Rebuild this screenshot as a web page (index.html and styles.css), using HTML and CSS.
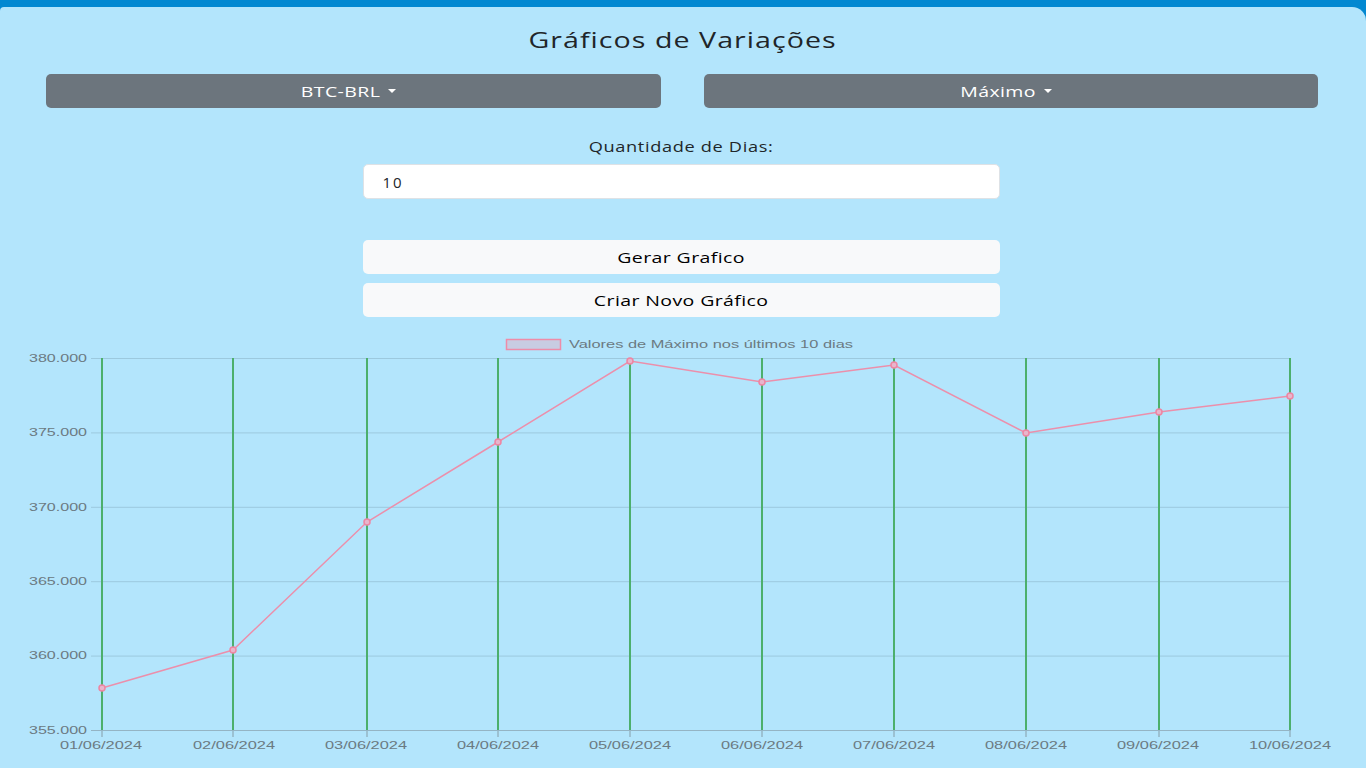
FILE: index.html
```html
<!DOCTYPE html>
<html lang="pt-BR">
<head>
<meta charset="utf-8">
<title>Gráficos de Variações</title>
<link rel="stylesheet" href="styles.css">
</head>
<body>
<div class="topbar"></div>
<main class="panel">
  <h1 class="title"><span class="wide">Gráficos de Variações</span></h1>
  <div class="selects">
    <button class="dropdown"><span class="wide">BTC-BRL</span><span class="caret"></span></button>
    <button class="dropdown"><span class="wide">Máximo</span><span class="caret"></span></button>
  </div>
  <div class="form">
    <label class="label" for="dias"><span class="wide">Quantidade de Dias:</span></label>
    <input id="dias" class="input" type="text" value="10">
    <div class="actions">
      <button class="btn-light"><span class="wide">Gerar Grafico</span></button>
      <button class="btn-light"><span class="wide">Criar Novo Gráfico</span></button>
    </div>
  </div>
  <div class="chart">
    <svg class="chart-svg" width="1366" height="438" viewBox="0 330 1366 438" xmlns="http://www.w3.org/2000/svg">
      <!-- legend -->
      <rect x="506.5" y="339.5" width="54" height="10" fill="#c8cce2" stroke="#ee8ca8" stroke-width="1.5"/>
      <text x="569" y="348" class="tick" textLength="284" lengthAdjust="spacingAndGlyphs">Valores de Máximo nos últimos 10 dias</text>

      <!-- horizontal grid -->
      <g stroke="#9cc9de" stroke-width="1">
        <line x1="91" y1="358.5" x2="1291" y2="358.5"/>
        <line x1="91" y1="432.9" x2="1291" y2="432.9"/>
        <line x1="91" y1="507.3" x2="1291" y2="507.3"/>
        <line x1="91" y1="581.7" x2="1291" y2="581.7"/>
        <line x1="91" y1="656.1" x2="1291" y2="656.1"/>
      </g>
      <line x1="91" y1="730.5" x2="1291" y2="730.5" stroke="#94b4c4" stroke-width="1"/>

      <!-- y labels -->
      <g class="tick" text-anchor="end">
        <text x="87" y="362" textLength="58" lengthAdjust="spacingAndGlyphs">380.000</text>
        <text x="87" y="436" textLength="58" lengthAdjust="spacingAndGlyphs">375.000</text>
        <text x="87" y="511" textLength="58" lengthAdjust="spacingAndGlyphs">370.000</text>
        <text x="87" y="585" textLength="58" lengthAdjust="spacingAndGlyphs">365.000</text>
        <text x="87" y="659" textLength="58" lengthAdjust="spacingAndGlyphs">360.000</text>
        <text x="87" y="734" textLength="58" lengthAdjust="spacingAndGlyphs">355.000</text>
      </g>

      <!-- vertical green grid -->
      <g stroke="#4caf6c" stroke-width="2">
        <line x1="102" y1="358" x2="102" y2="730"/>
        <line x1="233" y1="358" x2="233" y2="730"/>
        <line x1="367" y1="358" x2="367" y2="730"/>
        <line x1="498" y1="358" x2="498" y2="730"/>
        <line x1="630" y1="358" x2="630" y2="730"/>
        <line x1="762" y1="358" x2="762" y2="730"/>
        <line x1="894" y1="358" x2="894" y2="730"/>
        <line x1="1026" y1="358" x2="1026" y2="730"/>
        <line x1="1159" y1="358" x2="1159" y2="730"/>
        <line x1="1290" y1="358" x2="1290" y2="730"/>
      </g>
      <!-- x ticks -->
      <g stroke="#94b4c4" stroke-width="1.5">
        <line x1="102" y1="731" x2="102" y2="737"/>
        <line x1="233" y1="731" x2="233" y2="737"/>
        <line x1="367" y1="731" x2="367" y2="737"/>
        <line x1="498" y1="731" x2="498" y2="737"/>
        <line x1="630" y1="731" x2="630" y2="737"/>
        <line x1="762" y1="731" x2="762" y2="737"/>
        <line x1="894" y1="731" x2="894" y2="737"/>
        <line x1="1026" y1="731" x2="1026" y2="737"/>
        <line x1="1159" y1="731" x2="1159" y2="737"/>
        <line x1="1290" y1="731" x2="1290" y2="737"/>
      </g>

      <!-- x labels -->
      <g class="tick" text-anchor="middle">
        <text x="101" y="749" textLength="82" lengthAdjust="spacingAndGlyphs">01/06/2024</text>
        <text x="234" y="749" textLength="82" lengthAdjust="spacingAndGlyphs">02/06/2024</text>
        <text x="366" y="749" textLength="82" lengthAdjust="spacingAndGlyphs">03/06/2024</text>
        <text x="498" y="749" textLength="82" lengthAdjust="spacingAndGlyphs">04/06/2024</text>
        <text x="630" y="749" textLength="82" lengthAdjust="spacingAndGlyphs">05/06/2024</text>
        <text x="762" y="749" textLength="82" lengthAdjust="spacingAndGlyphs">06/06/2024</text>
        <text x="894" y="749" textLength="82" lengthAdjust="spacingAndGlyphs">07/06/2024</text>
        <text x="1026" y="749" textLength="82" lengthAdjust="spacingAndGlyphs">08/06/2024</text>
        <text x="1158" y="749" textLength="82" lengthAdjust="spacingAndGlyphs">09/06/2024</text>
        <text x="1290" y="749" textLength="82" lengthAdjust="spacingAndGlyphs">10/06/2024</text>
      </g>

      <!-- data line -->
      <polyline fill="none" stroke="#ec8fab" stroke-width="1.5"
        points="102,688 233,650 367,522 498,442 630,361 762,382 894,365 1026,433 1159,412 1290,396"/>
      <g fill="#e8b5cc" stroke="#ee85a3" stroke-width="1.5">
        <circle cx="102" cy="688" r="3"/>
        <circle cx="233" cy="650" r="3"/>
        <circle cx="367" cy="522" r="3"/>
        <circle cx="498" cy="442" r="3"/>
        <circle cx="630" cy="361" r="3"/>
        <circle cx="762" cy="382" r="3"/>
        <circle cx="894" cy="365" r="3"/>
        <circle cx="1026" cy="433" r="3"/>
        <circle cx="1159" cy="412" r="3"/>
        <circle cx="1290" cy="396" r="3"/>
      </g>
    </svg>
  </div>
</main>
</body>
</html>
```

FILE: styles.css
```css
* { box-sizing: border-box; }

html, body {
  margin: 0;
  padding: 0;
  height: 100%;
}

body {
  background: #0288d1;
  font-family: "Open Sans", "Noto Sans", sans-serif;
  color: #212529;
  overflow: hidden;
}

.topbar {
  height: 7px;
}

.panel {
  background: #b3e5fc;
  border-radius: 4px 14px 0 0;
  height: 761px;
  display: flex;
  flex-direction: column;
}

/* the reference renders its text horizontally widened */
.wide {
  display: inline-block;
  transform: scaleX(1.3);
}

.title {
  margin: 0;
  padding-top: 18px;
  height: 67px;
  text-align: center;
  font-size: 22px;
  font-weight: 500;
  letter-spacing: 0.8px;
  line-height: 28px;
}

.selects {
  display: grid;
  grid-template-columns: 1fr 1fr;
  column-gap: 43px;
  padding: 0 48px 0 46px;
}

.dropdown {
  height: 34px;
  border: none;
  border-radius: 5px;
  background: #6c757d;
  color: #fff;
  font-family: inherit;
  font-size: 15px;
  letter-spacing: 0.3px;
  display: flex;
  align-items: center;
  justify-content: center;
  cursor: pointer;
}

.caret {
  display: inline-block;
  margin-left: 17px;
  width: 0;
  height: 0;
  border-left: 4.5px solid transparent;
  border-right: 4.5px solid transparent;
  border-top: 4.5px solid #fff;
}

.form {
  width: 637px;
  margin: 0 auto;
  padding-top: 29px;
  position: relative;
  left: -2px;
  display: flex;
  flex-direction: column;
  align-items: stretch;
}

.label {
  text-align: center;
  font-size: 14px;
  letter-spacing: 0.5px;
  line-height: 20px;
  margin-bottom: 7px;
}

.input {
  height: 35px;
  border: 1px solid #dee2e6;
  border-radius: 5px;
  background: #fff;
  padding: 0 19px;
  font-family: inherit;
  font-size: 15px;
  letter-spacing: 2px;
  color: #212529;
}

.actions {
  margin-top: 41px;
  display: flex;
  flex-direction: column;
  gap: 9px;
}

.btn-light {
  height: 34px;
  border: none;
  border-radius: 5px;
  background: #f8f9fa;
  color: #000;
  font-family: inherit;
  font-size: 15px;
  letter-spacing: 0.3px;
  cursor: pointer;
}

.chart {
  margin-top: 13px;
}

.chart-svg {
  display: block;
}

.tick {
  font-family: "Liberation Sans", Arial, sans-serif;
  font-size: 11px;
  fill: #6b7a82;
}
```
